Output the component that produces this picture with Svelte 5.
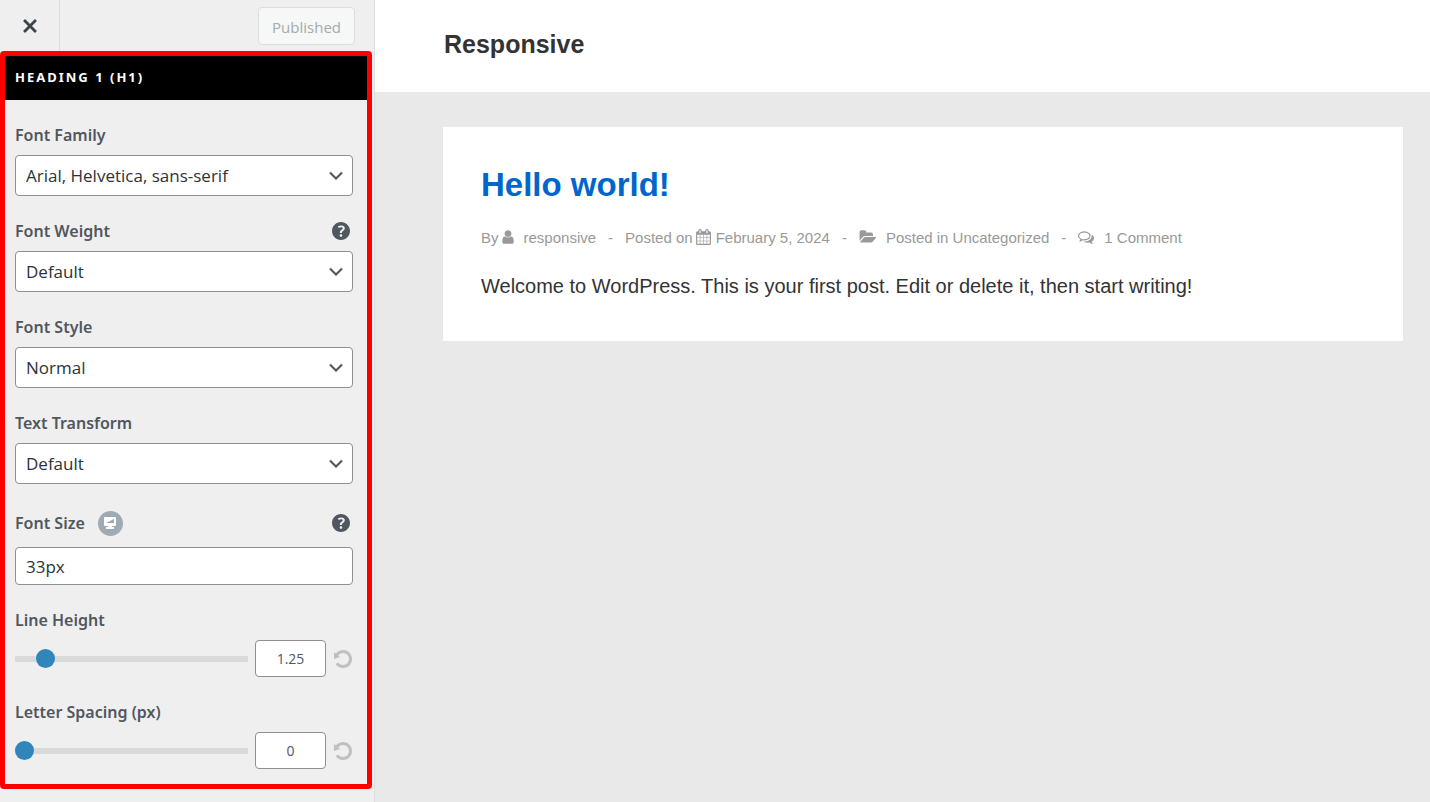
<script>
    let family = "Arial, Helvetica, sans-serif";
    let weight = "Default";
    let style = "Normal";
    let transform = "Default";
    let fontSize = "33px";
    let lineHeight = 1.25;
    let letterSpacing = 0;

    const families = ["Arial, Helvetica, sans-serif", "Georgia, serif", "Verdana, sans-serif"];
    const weights = ["Default", "Normal", "Semibold", "Bold"];
    const styles = ["Normal", "Italic"];
    const transforms = ["Default", "Capitalize", "Lowercase", "Uppercase"];
</script>

{#snippet helpIcon()}
    <svg viewBox="3 3 14 14" width="18" height="18" aria-hidden="true">
        <path fill="currentColor" d="M17 10c0-3.87-3.14-7-7-7-3.87 0-7 3.13-7 7s3.13 7 7 7c3.86 0 7-3.13 7-7zm-6.3 1.48H9.14v-.43c0-.38.08-.7.24-.98s.46-.57.88-.89c.41-.29.68-.53.81-.71.14-.18.2-.39.2-.62 0-.25-.09-.44-.28-.58-.19-.13-.45-.19-.79-.19-.58 0-1.25.19-2 .57l-.64-1.28c.87-.49 1.8-.74 2.77-.74.81 0 1.45.2 1.92.58.48.39.71.91.71 1.55 0 .43-.09.8-.29 1.11-.19.32-.57.67-1.11 1.06-.38.28-.61.49-.71.63-.1.15-.15.34-.15.57v.35zm-1.47 2.74c-.18-.17-.27-.42-.27-.73 0-.33.08-.58.26-.75s.43-.25.77-.25c.32 0 .57.09.75.26s.27.42.27.74c0 .3-.09.55-.27.72-.18.18-.43.27-.75.27-.33 0-.58-.09-.76-.26z" />
    </svg>
{/snippet}

{#snippet resetIcon()}
    <svg viewBox="0 0 20 20" width="20" height="20" aria-hidden="true">
        <path fill="currentColor" d="M10.25 1.02c5.1 0 8.75 4.04 8.75 9s-3.65 9-8.75 9c-3.2 0-6.02-1.59-7.68-3.99l2.59-1.52c1.1 1.5 2.86 2.51 4.84 2.51 3.3 0 6-2.79 6-6s-2.7-6-6-6c-1.97 0-3.72 1-4.82 2.49L7 8.02l-6 2v-7L2.89 4.6c1.69-2.17 4.36-3.58 7.36-3.58z" />
    </svg>
{/snippet}

<div class="customizer">
    <aside class="sidebar">
        <div class="actions">
            <button type="button" class="close" aria-label="Close">
                <svg viewBox="0 0 20 20" width="28" height="28" aria-hidden="true">
                    <path fill="currentColor" d="M14.95 6.46L11.41 10l3.54 3.54-1.41 1.41L10 11.42l-3.53 3.53-1.42-1.42L8.58 10 5.05 6.47l1.42-1.42L10 8.58l3.54-3.53z" />
                </svg>
            </button>
            <button type="button" class="publish" disabled>Published</button>
        </div>

        <section class="panel">
            <h2>Heading 1 (H1)</h2>
            <div class="fields">
                <div class="field">
                    <div class="label-row">
                        <label for="field_family">Font Family</label>
                    </div>
                    <select id="field_family" bind:value={family}>
                        {#each families as item}
                            <option value={item}>{item}</option>
                        {/each}
                    </select>
                </div>
                <div class="field">
                    <div class="label-row">
                        <label for="field_weight">Font Weight</label>
                        <button type="button" class="help" aria-label="Help">{@render helpIcon()}</button>
                    </div>
                    <select id="field_weight" bind:value={weight}>
                        {#each weights as item}
                            <option value={item}>{item}</option>
                        {/each}
                    </select>
                </div>
                <div class="field">
                    <div class="label-row">
                        <label for="field_style">Font Style</label>
                    </div>
                    <select id="field_style" bind:value={style}>
                        {#each styles as item}
                            <option value={item}>{item}</option>
                        {/each}
                    </select>
                </div>
                <div class="field">
                    <div class="label-row">
                        <label for="field_transform">Text Transform</label>
                    </div>
                    <select id="field_transform" bind:value={transform}>
                        {#each transforms as item}
                            <option value={item}>{item}</option>
                        {/each}
                    </select>
                </div>
                <div class="field">
                    <div class="label-row tall">
                        <label for="field_size">Font Size</label>
                        <button type="button" class="device" aria-label="Desktop">
                            <svg viewBox="0 0 12 12" width="12" height="12" aria-hidden="true">
                                <path fill="#fff" d="M1 0h10q1 0 1 1v7q0 1-1 1H8v1h2v2H2v-2h2V9H1q-1 0-1-1V1q0-1 1-1z" />
                                <path fill="#a0aab2" d="M2 6l8-4v4z" />
                            </svg>
                        </button>
                        <button type="button" class="help" aria-label="Help">{@render helpIcon()}</button>
                    </div>
                    <input id="field_size" class="text" type="text" bind:value={fontSize}>
                </div>
                <div class="field">
                    <div class="label-row">
                        <label for="field_line">Line Height</label>
                    </div>
                    <div class="slider-row">
                        <input id="field_line" type="range" min="1" max="3.5" step="0.05" bind:value={lineHeight}>
                        <input type="number" step="0.05" aria-label="Line Height value" bind:value={lineHeight}>
                        <button type="button" class="reset" aria-label="Reset" on:click={() => lineHeight = 1.25}>{@render resetIcon()}</button>
                    </div>
                </div>
                <div class="field">
                    <div class="label-row">
                        <label for="field_spacing">Letter Spacing (px)</label>
                    </div>
                    <div class="slider-row">
                        <input id="field_spacing" type="range" min="0" max="10" bind:value={letterSpacing}>
                        <input type="number" aria-label="Letter Spacing value" bind:value={letterSpacing}>
                        <button type="button" class="reset" aria-label="Reset" on:click={() => letterSpacing = 0}>{@render resetIcon()}</button>
                    </div>
                </div>
            </div>
        </section>
    </aside>

    <main class="preview">
        <header>
            <a class="site-title" href="#home">Responsive</a>
        </header>
        <article>
            <h1><a href="#post">Hello world!</a></h1>
            <div class="meta">
                <span class="item near">
                    By
                    <svg viewBox="256 0 1280 1792" width="12" height="16" aria-hidden="true">
                        <path fill="currentColor" d="M1536 1399q0 109-62.5 187t-150.5 78h-854q-88 0-150.5-78t-62.5-187q0-85 8.5-160.5t31.5-152 58.5-131 94-89 134.5-34.5q131 128 313 128t313-128q76 0 134.5 34.5t94 89 58.5 131 31.5 152 8.5 160.5zm-256-887q0 159-112.5 271.5t-271.5 112.5-271.5-112.5-112.5-271.5 112.5-271.5 271.5-112.5 271.5 112.5 112.5 271.5z" />
                    </svg>
                </span>
                <a class="author" href="#author">responsive</a>
                <span class="dash">-</span>
                <span class="item near">
                    Posted on
                    <svg viewBox="64 0 1664 1792" width="15" height="16" aria-hidden="true">
                        <path fill="currentColor" d="M192 1664h288v-288h-288v288zm352 0h320v-288h-320v288zm-352-352h288v-320h-288v320zm352 0h320v-320h-320v320zm-352-384h288v-288h-288v288zm736 736h320v-288h-320v288zm-384-736h320v-288h-320v288zm768 736h288v-288h-288v288zm-384-352h320v-320h-320v320zm-352-864v-288q0-13-9.5-22.5t-22.5-9.5h-64q-13 0-22.5 9.5t-9.5 22.5v288q0 13 9.5 22.5t22.5 9.5h64q13 0 22.5-9.5t9.5-22.5zm736 864h288v-320h-288v320zm-384-384h320v-288h-320v288zm384 0h288v-288h-288v288zm32-480v-288q0-13-9.5-22.5t-22.5-9.5h-64q-13 0-22.5 9.5t-9.5 22.5v288q0 13 9.5 22.5t22.5 9.5h64q13 0 22.5-9.5t9.5-22.5zm384-64v1280q0 52-38 90t-90 38h-1408q-52 0-90-38t-38-90v-1280q0-52 38-90t90-38h128v-96q0-66 47-113t113-47h64q66 0 113 47t47 113v96h384v-96q0-66 47-113t113-47h64q66 0 113 47t47 113v96h128q52 0 90 38t38 90z" />
                    </svg>
                    <a href="#date">February 5, 2024</a>
                </span>
                <span class="dash">-</span>
                <span class="item">
                    <svg viewBox="0 0 1943 1792" width="17" height="16" aria-hidden="true">
                        <path fill="currentColor" d="M1943 952q0 31-31 66l-336 396q-43 51-120.5 86.5t-143.5 35.5h-1088q-34 0-60.5-13t-26.5-43q0-31 31-66l336-396q43-51 120.5-86.5t143.5-35.5h1088q34 0 60.5 13t26.5 43zm-343-344v160h-832q-94 0-197 47.5t-164 119.5l-337 396-5 6q0-4-.5-12.5t-.5-12.5v-960q0-92 66-158t158-66h320q92 0 158 66t66 158v32h544q92 0 158 66t66 158z" />
                    </svg>
                    <span>Posted in <a href="#category">Uncategorized</a></span>
                </span>
                <span class="dash">-</span>
                <span class="item">
                    <svg viewBox="0 0 1792 1792" width="16" height="16" aria-hidden="true">
                        <path fill="currentColor" d="M704 384q-153 0-286 52t-211.5 141-78.5 191q0 82 53 158t149 132l97 56-35 84q34-20 62-39l44-31 53 10q78 14 153 14 153 0 286-52t211.5-141 78.5-191-78.5-191-211.5-141-286-52zm0-128q191 0 353.5 68.5t256.5 186.5 94 257-94 257-256.5 186.5-353.5 68.5q-86 0-176-16-124 88-278 128-36 9-86 16h-3q-11 0-20.5-8t-11.5-21q-1-3-1-6.5t.5-6.5 2-6l2.5-5 3.5-5.5 4-5 4.5-5 4-4.5q5-6 23-25t26-29.5 22.5-29 25-38.5 20.5-44q-124-72-195-177t-71-224q0-139 94-257t256.5-186.5 353.5-68.5zm822 1169q10 24 20.5 44t25 38.5 22.5 29 26 29.5 23 25q1 1 4 4.5t4.5 5 4 5 3.5 5.5l2.5 5 2 6 .5 6.5-1 6.5q-3 14-13 22t-22 7q-50-7-86-16-154-40-278-128-90 16-176 16-271 0-472-132 58 4 88 4 161 0 309-45t264-129q125-92 192-212t67-254q0-77-23-152 129 71 204 178t75 230q0 120-71 224.5t-195 176.5z" />
                    </svg>
                    <a href="#comments">1 Comment</a>
                </span>
            </div>
            <p>Welcome to WordPress. This is your first post. Edit or delete it, then start writing!</p>
        </article>
    </main>
</div>

<style>
    :global(body) {
        margin: 0;
    }

    .customizer, .customizer * {
        box-sizing: border-box;
    }

    .customizer {
        display: flex;
        min-height: 100vh;
        font-family: "Liberation Sans", Arial, sans-serif;
    }

    .sidebar {
        flex: 0 0 375px;
        padding-right: 2px;
        background: #efefef;
        border-right: 1px solid #dcdcde;
        color: #50575e;
        font-family: "Segoe UI", "Open Sans", sans-serif;
    }

    button, input, select {
        font-family: inherit;
        margin: 0;
    }

    button {
        display: flex;
        align-items: center;
        justify-content: center;
        padding: 0;
        border: none;
        background: none;
        color: inherit;
    }

    .actions {
        display: flex;
        align-items: center;
        justify-content: space-between;
        height: 51px;
        padding-right: 17px;
    }

    .close {
        width: 60px;
        height: 51px;
        border-right: 1px solid #dcdcde;
        color: #3c434a;
    }

    .publish {
        height: 38px;
        padding: 2px 13px 0;
        border: 1px solid #dcdcde;
        border-radius: 4px;
        background: #f6f7f7;
        color: #a7aaad;
        font-size: 15px;
    }

    .panel {
        border: 5px solid #f00;
        border-radius: 4px;
    }

    h2 {
        margin: 0;
        padding: 0 10px 2px;
        background: #000;
        color: #fff;
        font-family: "Segoe UI", "Noto Sans", sans-serif;
        font-size: 13px;
        font-weight: 700;
        line-height: 42px;
        letter-spacing: 2px;
        text-transform: uppercase;
    }

    .fields {
        display: flex;
        flex-direction: column;
        gap: 23px;
        padding: 23px 14px 15px 10px;
    }

    .field {
        display: flex;
        flex-direction: column;
        gap: 8px;
    }

    .label-row {
        display: flex;
        align-items: center;
        gap: 13px;
        height: 24px;
        padding-right: 3px;
        font-family: "Segoe UI", "Noto Sans", sans-serif;
        font-size: 16px;
        font-weight: 600;
    }

    .label-row.tall {
        height: 32px;
    }

    .help {
        margin-left: auto;
    }

    .device {
        width: 25px;
        height: 25px;
        border-radius: 50%;
        background: #a0aab2;
    }

    select, .text, input[type="number"] {
        width: 100%;
        border: 1px solid #8c8f94;
        border-radius: 4px;
        background: #fff;
        color: #2c3338;
        font-size: 17px;
    }

    select {
        appearance: none;
        height: 41px;
        padding: 0 30px 0 10px;
        background: #fff url("data:image/svg+xml,%3Csvg xmlns='http://www.w3.org/2000/svg' viewBox='0 0 20 20'%3E%3Cpath d='M5 6l5 5 5-5 2 1-7 7-7-7 2-1z' fill='%23555'/%3E%3C/svg%3E") no-repeat right 6px center / 20px 20px;
    }

    .text {
        height: 38px;
        padding: 1px 10px 0;
    }

    .slider-row {
        display: flex;
        align-items: center;
        gap: 7px;
    }

    input[type="range"] {
        flex: 1;
        min-width: 0;
        height: 20px;
        appearance: none;
        background: none;
    }

    input[type="range"]::-webkit-slider-runnable-track {
        height: 6px;
        background: #d9d9d9;
    }

    input[type="range"]::-webkit-slider-thumb {
        appearance: none;
        width: 19px;
        height: 19px;
        margin-top: -7px;
        border-radius: 50%;
        background: #3085bb;
    }

    input[type="number"] {
        appearance: textfield;
        width: 71px;
        height: 37px;
        padding: 0;
        color: #50575e;
        font-size: 14px;
        text-align: center;
    }

    input[type="number"]::-webkit-inner-spin-button {
        appearance: none;
        margin: 0;
    }

    .reset {
        color: #c0c0c0;
    }

    .preview {
        flex: 1;
        min-width: 0;
        background: #e9e9e9;
    }

    header {
        display: flex;
        align-items: center;
        height: 92px;
        padding: 0 69px;
        background: #fff;
    }

    a {
        color: inherit;
        text-decoration: none;
    }

    .site-title {
        padding-bottom: 4px;
        color: #333;
        font-size: 25px;
        font-weight: 700;
    }

    article {
        margin: 35px 27px 0 68px;
        padding: 36px 38px;
        background: #fff;
    }

    h1 {
        margin: 0;
        color: #0066cc;
        font-size: 33px;
        line-height: 44px;
    }

    .meta {
        display: flex;
        align-items: center;
        height: 24px;
        margin-top: 18px;
        color: #999;
        font-size: 15px;
        white-space: nowrap;
    }

    .item {
        display: flex;
        align-items: center;
        gap: 10px;
    }

    .item.near {
        gap: 3px;
    }

    .near a {
        margin-left: 2px;
    }

    .author {
        margin-left: 10px;
    }

    .dash {
        margin: 0 12px;
    }

    p {
        margin: 20px 0 0;
        padding-bottom: 2px;
        color: #333;
        font-size: 20px;
        line-height: 34px;
    }
</style>
